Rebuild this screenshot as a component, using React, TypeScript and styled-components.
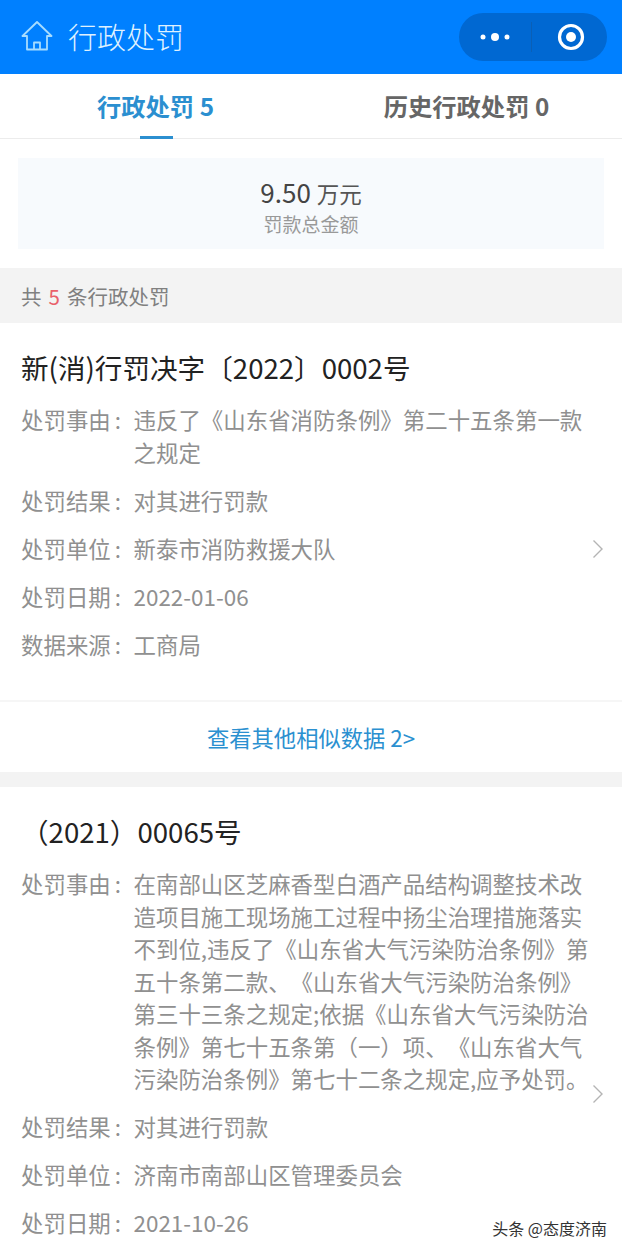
import React from 'react';
import styled, {createGlobalStyle} from 'styled-components';

const GlobalStyle = createGlobalStyle`
  html, body {
    margin: 0;
    padding: 0;
    background: #fff;
  }
  body {
    font-family: "Noto Sans CJK SC", "Noto Sans", sans-serif;
    text-spacing-trim: space-all;
  }
`;

interface RowData {
  label: string;
  value: string;
}

interface Penalty {
  title: string;
  tail: number;
  rows: RowData[];
}

const penalties: Penalty[] = [
  {
    title: '新(消)行罚决字〔2022〕0002号',
    tail: 34,
    rows: [
      {label: '处罚事由', value: '违反了《山东省消防条例》第二十五条第一款\n之规定'},
      {label: '处罚结果', value: '对其进行罚款'},
      {label: '处罚单位', value: '新泰市消防救援大队'},
      {label: '处罚日期', value: '2022-01-06'},
      {label: '数据来源', value: '工商局'},
    ],
  },
  {
    title: '\uFF082021\uFF0900065号',
    tail: 82,
    rows: [
      {
        label: '处罚事由',
        value:
          '在南部山区芝麻香型白酒产品结构调整技术改\n造项目施工现场施工过程中扬尘治理措施落实\n不到位,违反了《山东省大气污染防治条例》第\n五十条第二款、《山东省大气污染防治条例》\n第三十三条之规定;依据《山东省大气污染防治\n条例》第七十五条第\uFF08一\uFF09项、《山东省大气\n污染防治条例》第七十二条之规定,应予处罚。',
      },
      {label: '处罚结果', value: '对其进行罚款'},
      {label: '处罚单位', value: '济南市南部山区管理委员会'},
      {label: '处罚日期', value: '2021-10-26'},
    ],
  },
];

const HomeIcon = () => (
  <svg width="32" height="32" viewBox="0 0 32 32" fill="none" stroke="#a6dcff" strokeWidth="1.8" strokeLinejoin="round">
    <path d="M16 1 L1.5 15 H6 V28.5 H26 V15 H30.5 Z" />
    <path d="M13 28.5 V21.5 H19 V28.5" />
  </svg>
);

const MoreDots = () => (
  <svg width="32" height="12" viewBox="0 0 32 12" fill="#fff">
    <circle cx="4" cy="6" r="2.5" />
    <circle cx="16" cy="6" r="4" />
    <circle cx="28" cy="6" r="2.5" />
  </svg>
);

const CloseTarget = () => (
  <svg width="30" height="30" viewBox="0 0 30 30">
    <circle cx="15" cy="15" r="11.5" fill="none" stroke="#fff" strokeWidth="3.2" />
    <circle cx="15" cy="15" r="5" fill="#fff" />
  </svg>
);

const Chevron = () => (
  <svg width="12" height="20" viewBox="0 0 12 20" fill="none" stroke="#b4b4b4" strokeWidth="1.4">
    <path d="M1.5 1.5 L10 10 L1.5 18.5" />
  </svg>
);

const App = () => {
  return (
    <Page>
      <GlobalStyle />
      <NavBar>
        <HomeIcon />
        <NavTitle>行政处罚</NavTitle>
        <Capsule>
          <CapsuleSide>
            <MoreDots />
          </CapsuleSide>
          <CapsuleDivider />
          <CapsuleSide $pad={4}>
            <CloseTarget />
          </CapsuleSide>
        </Capsule>
      </NavBar>
      <Tabs>
        <Tab $active>行政处罚 5</Tab>
        <Tab>历史行政处罚 0</Tab>
      </Tabs>
      <SummaryWrap>
        <Summary>
          <Amount>
            9.50 <AmountUnit>万元</AmountUnit>
          </Amount>
          <AmountLabel>罚款总金额</AmountLabel>
        </Summary>
      </SummaryWrap>
      <CountBar>
        共 <CountNumber>5</CountNumber> 条行政处罚
      </CountBar>
      {penalties.map((item, idx) => (
        <Card key={item.title}>
          <CardTitle>{item.title}</CardTitle>
          <CardBody>
            <Rows $tail={item.tail}>
              {item.rows.map(row => (
                <Row key={row.label}>
                  <RowLabel>
                    {row.label}
                    <Colon>:</Colon>
                  </RowLabel>
                  <RowValue>{row.value}</RowValue>
                </Row>
              ))}
            </Rows>
            <Chevron />
          </CardBody>
          {idx === 0 && (
            <>
              <MoreLink>查看其他相似数据 2&gt;</MoreLink>
              <Gap />
            </>
          )}
        </Card>
      ))}
      <Watermark>头条 @态度济南</Watermark>
    </Page>
  );
};

export default App;

const Page = styled.div`
  position: relative;
  width: 622px;
  height: 1251px;
  overflow: hidden;
  background: #fff;
`;

const NavBar = styled.div`
  height: 74px;
  box-sizing: border-box;
  display: flex;
  align-items: center;
  padding: 0 15px 0 21px;
  background: #0080ff;
`;

const NavTitle = styled.div`
  margin: 0 0 3px 15px;
  font-size: 29px;
  line-height: 40px;
  font-weight: 300;
  color: #dff1ff;
`;

const Capsule = styled.div`
  margin-left: auto;
  width: 148px;
  height: 48px;
  display: flex;
  align-items: center;
  border-radius: 24px;
  background: #0068d2;
`;

const CapsuleSide = styled.div<{$pad?: number}>`
  flex: 1;
  display: flex;
  align-items: center;
  justify-content: center;
  padding-left: ${p => p.$pad ?? 0}px;
`;

const CapsuleDivider = styled.div`
  width: 1px;
  height: 30px;
  background: #0a5fb6;
`;

const Tabs = styled.div`
  height: 65px;
  box-sizing: border-box;
  display: flex;
  border-bottom: 1px solid #ececec;
`;

const Tab = styled.div<{$active?: boolean}>`
  position: relative;
  flex: 1;
  display: flex;
  align-items: center;
  justify-content: center;
  padding-bottom: 1px;
  font-size: 24.3px;
  font-weight: 700;
  color: ${p => (p.$active ? '#2b8fd0' : '#666')};

  &::after {
    content: '';
    display: ${p => (p.$active ? 'block' : 'none')};
    position: absolute;
    left: 50%;
    bottom: -1px;
    width: 33px;
    height: 3px;
    margin-left: -16px;
    background: #2b8fd0;
  }
`;

const SummaryWrap = styled.div`
  padding: 19px 18px;
`;

const Summary = styled.div`
  height: 91px;
  box-sizing: border-box;
  display: flex;
  flex-direction: column;
  align-items: center;
  justify-content: center;
  padding-top: 5px;
  background: #f7fafd;
`;

const Amount = styled.div`
  font-size: 26px;
  line-height: 34px;
  color: #444;
`;

const AmountUnit = styled.span`
  font-size: 22.5px;
  color: #555;
`;

const AmountLabel = styled.div`
  font-size: 19px;
  line-height: 28px;
  color: #999;
`;

const CountBar = styled.div`
  height: 55px;
  box-sizing: border-box;
  display: flex;
  align-items: center;
  gap: 7px;
  padding-left: 21px;
  font-size: 20.5px;
  color: #808080;
  background: #f3f3f3;
`;

const CountNumber = styled.span`
  color: #e9616b;
`;

const Card = styled.div`
  background: #fff;
`;

const CardTitle = styled.div`
  height: 80px;
  box-sizing: border-box;
  display: flex;
  align-items: center;
  padding: 8px 0 0 21px;
  font-size: 27.6px;
  color: #222;
`;

const CardBody = styled.div`
  display: flex;
  align-items: center;
  padding-right: 18px;
  padding-bottom: 6px;
`;

const Rows = styled.div<{$tail: number}>`
  flex: 1;
  min-width: 0;
  display: flex;
  flex-direction: column;
  gap: 15.5px;
  padding-bottom: ${p => p.$tail}px;
`;

const Row = styled.div`
  display: flex;
  padding-left: 21px;
  font-size: 22.45px;
  line-height: 32.5px;
  color: #909090;
`;

const RowLabel = styled.div`
  flex: none;
  width: 112.5px;
`;

const Colon = styled.span`
  margin-left: 4px;
`;

const RowValue = styled.div`
  white-space: pre-line;
`;

const MoreLink = styled.div`
  height: 72px;
  box-sizing: border-box;
  display: flex;
  align-items: center;
  justify-content: center;
  border-top: 2px solid #f6f6f6;
  font-size: 22.3px;
  color: #2b90d0;
`;

const Gap = styled.div`
  height: 15px;
  background: #f3f3f3;
`;

const Watermark = styled.div`
  position: absolute;
  right: 15px;
  bottom: 10px;
  font-size: 16px;
  line-height: 26px;
  color: #333;
  text-shadow: 0 0 2px #fff, 0 0 2px #fff;
`;
